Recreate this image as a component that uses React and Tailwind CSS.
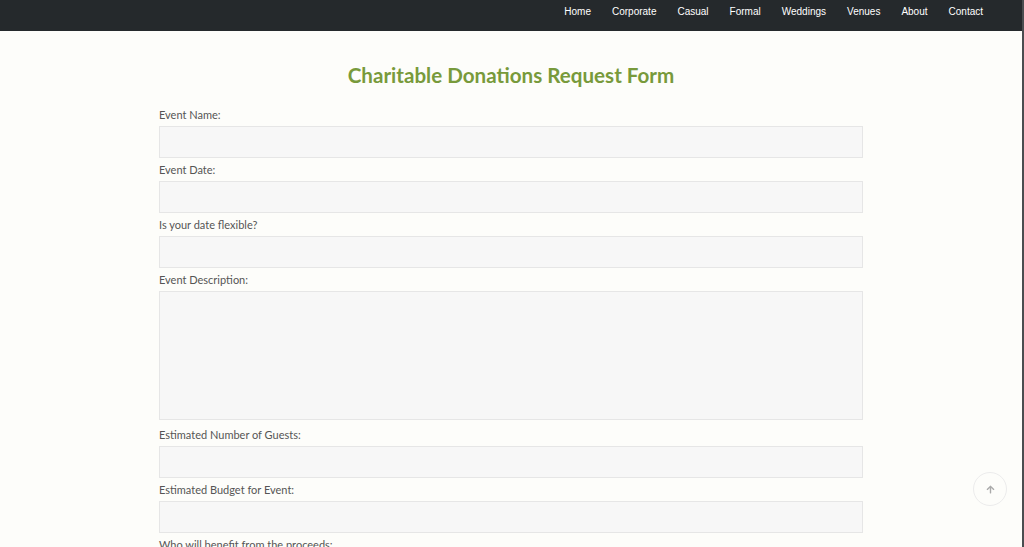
import { FaArrowUp } from "react-icons/fa";

function App() {
  const links = ["Home", "Corporate", "Casual", "Formal", "Weddings", "Venues", "About", "Contact"];

  const fields = [
    { label: "Event Name:" },
    { label: "Event Date:" },
    { label: "Is your date flexible?" },
    { label: "Event Description:", area: true },
    { label: "Estimated Number of Guests:" },
    { label: "Estimated Budget for Event:" },
    { label: "Who will benefit from the proceeds:" }
  ];

  return (
    <div className="relative h-[547px] overflow-hidden bg-[#fdfdfa] border-r-2 border-[#4a4d50] font-['Lato',sans-serif]">
      {/* Top bar */}
      <nav className="h-[31px] bg-[#25292c] flex justify-end items-start pt-[5px] pr-[39px]">
        <ul className="flex gap-[21px] text-[10px] leading-[14px] text-white font-['Liberation_Sans',sans-serif]">
          {links.map((link) => (
            <li key={link}>{link}</li>
          ))}
        </ul>
      </nav>

      {/* Form */}
      <div className="w-[704px] mx-auto pt-[30px]">
        <h1 className="text-center text-[20.6px] leading-[28px] font-bold text-[#789a3b] mb-[18px]">
          Charitable Donations Request Form
        </h1>

        {fields.map((f) => (
          <div key={f.label} className={f.area ? "mb-[7px]" : "mb-1"}>
            <label className="block text-[11px] leading-[16px] text-[#555] mb-[3px]">
              {f.label}
            </label>
            {f.area ? (
              <textarea className="block w-full h-[129px] bg-[#f7f7f7] border border-[#e6e6e6] resize-none" />
            ) : (
              <input className="block w-full h-[32px] bg-[#f7f7f7] border border-[#e6e6e6]" />
            )}
          </div>
        ))}
      </div>

      {/* Back to top */}
      <button className="absolute left-[973px] top-[472px] w-[34px] h-[34px] rounded-full border border-[#ececec] bg-[#fdfdfa] flex items-center justify-center text-[#aaa]">
        <FaArrowUp size={9} />
      </button>
    </div>
  );
}

export default App;
